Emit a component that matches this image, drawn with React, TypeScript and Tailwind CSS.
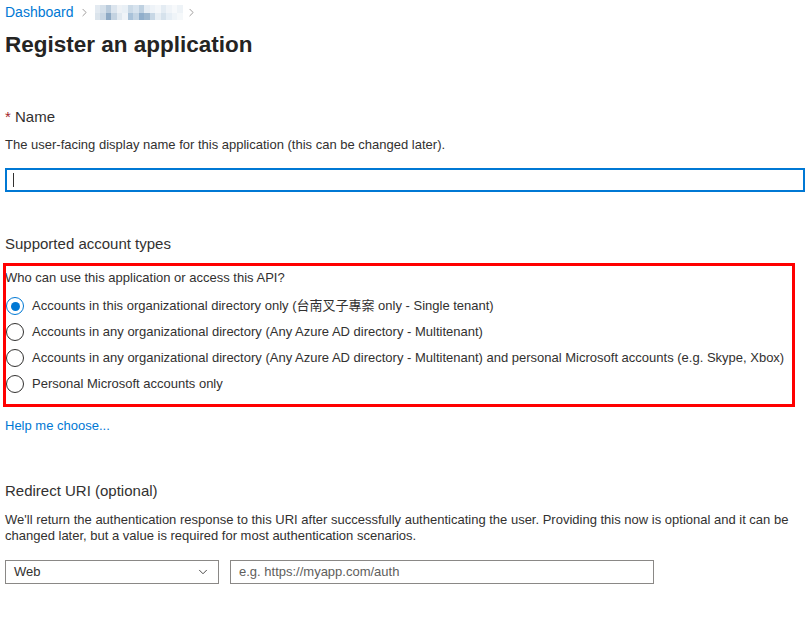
import { ChevronDown, ChevronRight } from 'lucide-react';

const font = { fontFamily: '"Liberation Sans", "Noto Sans CJK TC", sans-serif' };

const blur = [
  ['#e3eaf1', '#d5e0ea', '#b9cbdc', '#dce5ee', '#eef2f6', '#e9f0f6', '#cbdae7', '#d7e3ee', '#bfd1e1', '#e6edf4', '#eef3f8', '#f4f7fa', '#e4ecf3', '#f0f4f8', '#f7f9fb', '#eef3f7'],
  ['#dbe4ec', '#c9d7e4', '#8da9c4', '#c4d3e1', '#e1e9f0', '#f0f4f8', '#a9c2d9', '#c3d4e3', '#90aecb', '#9fb8cf', '#c7d7e5', '#e7eef4', '#d6e2ec', '#e6eef5', '#eff4f8', '#f5f8fa'],
];

const options = [
  'Accounts in this organizational directory only (台南叉子專案 only - Single tenant)',
  'Accounts in any organizational directory (Any Azure AD directory - Multitenant)',
  'Accounts in any organizational directory (Any Azure AD directory - Multitenant) and personal Microsoft accounts (e.g. Skype, Xbox)',
  'Personal Microsoft accounts only',
];

const Radio = ({ checked }: { checked: boolean }) => (
  <span
    className={`flex h-[18px] w-[18px] shrink-0 items-center justify-center rounded-full border ${
      checked ? 'border-[#0078d4]' : 'border-[#323130]'
    }`}
  >
    {checked && <span className="h-[9px] w-[9px] rounded-full bg-[#0078d4]" />}
  </span>
);

export default function App() {
  return (
    <div className="min-h-[637px] w-[810px] bg-white px-[5px] text-[#323130]" style={font}>
      {/* breadcrumb */}
      <div className="flex h-[25px] items-center text-[14px]">
        <span className="text-[#0078d4]">Dashboard</span>
        <ChevronRight className="ml-[4px] h-[13px] w-[13px] text-[#8a8886]" strokeWidth={1.5} />
        <div className="ml-[4px] flex flex-col">
          {blur.map((row, i) => (
            <div key={i} className="flex">
              {row.map((c, j) => (
                <span key={j} className="h-[7.5px] w-[5.5px]" style={{ background: c }} />
              ))}
            </div>
          ))}
        </div>
        <ChevronRight className="ml-[2px] h-[13px] w-[13px] text-[#8a8886]" strokeWidth={1.5} />
      </div>

      <h1 className="mt-[4px] text-[22.5px] font-semibold leading-[32px] text-[#252423]">Register an application</h1>

      {/* name */}
      <div className="mt-[46px] text-[15px] leading-[20px]">
        <span className="text-[#a4262c]">*</span> Name
      </div>
      <p className="mt-[9px] text-[13px] leading-[18px]">
        The user-facing display name for this application (this can be changed later).
      </p>
      <div className="mt-[14px] flex h-[24px] w-[800px] items-center border-2 border-[#0078d4] pl-[6px]">
        <span className="h-[14px] w-px bg-[#323130]" />
      </div>

      {/* account types */}
      <div className="mt-[42px] text-[15px] leading-[20px]">Supported account types</div>
      <div className="relative mt-[9px] pb-[14px]">
        <div className="text-[13px] leading-[30px]">Who can use this application or access this API?</div>
        <div className="mt-[4px] flex flex-col gap-[8px]">
          {options.map((o, i) => (
            <label key={i} className="flex h-[18px] items-center gap-[8px] pl-[1px] text-[13px]">
              <Radio checked={i === 0} />
              <span>{o}</span>
            </label>
          ))}
        </div>
        <div className="pointer-events-none absolute left-[-2px] top-0 h-[144px] w-[792px] border-[3px] border-[#ff0000]" />
      </div>
      <a className="mt-[10px] block text-[13px] leading-[18px] text-[#0078d4]">Help me choose...</a>

      {/* redirect */}
      <div className="mt-[46px] text-[15px] leading-[20px]">Redirect URI (optional)</div>
      <p className="mt-[11px] w-[795px] text-[13px] leading-[16px]">
        We'll return the authentication response to this URI after successfully authenticating the user. Providing this
        now is optional and it can be changed later, but a value is required for most authentication scenarios.
      </p>
      <div className="mt-[16px] flex items-center gap-[11px]">
        <div className="flex h-[24px] w-[214px] items-center justify-between border border-[#8a8886] px-[8px] text-[13px]">
          <span>Web</span>
          <ChevronDown className="h-[14px] w-[14px] text-[#323130]" strokeWidth={1.5} />
        </div>
        <div className="flex h-[24px] w-[424px] items-center border border-[#8a8886] px-[8px] text-[13px] text-[#605e5c]">
          e.g. https://myapp.com/auth
        </div>
      </div>
    </div>
  );
}
